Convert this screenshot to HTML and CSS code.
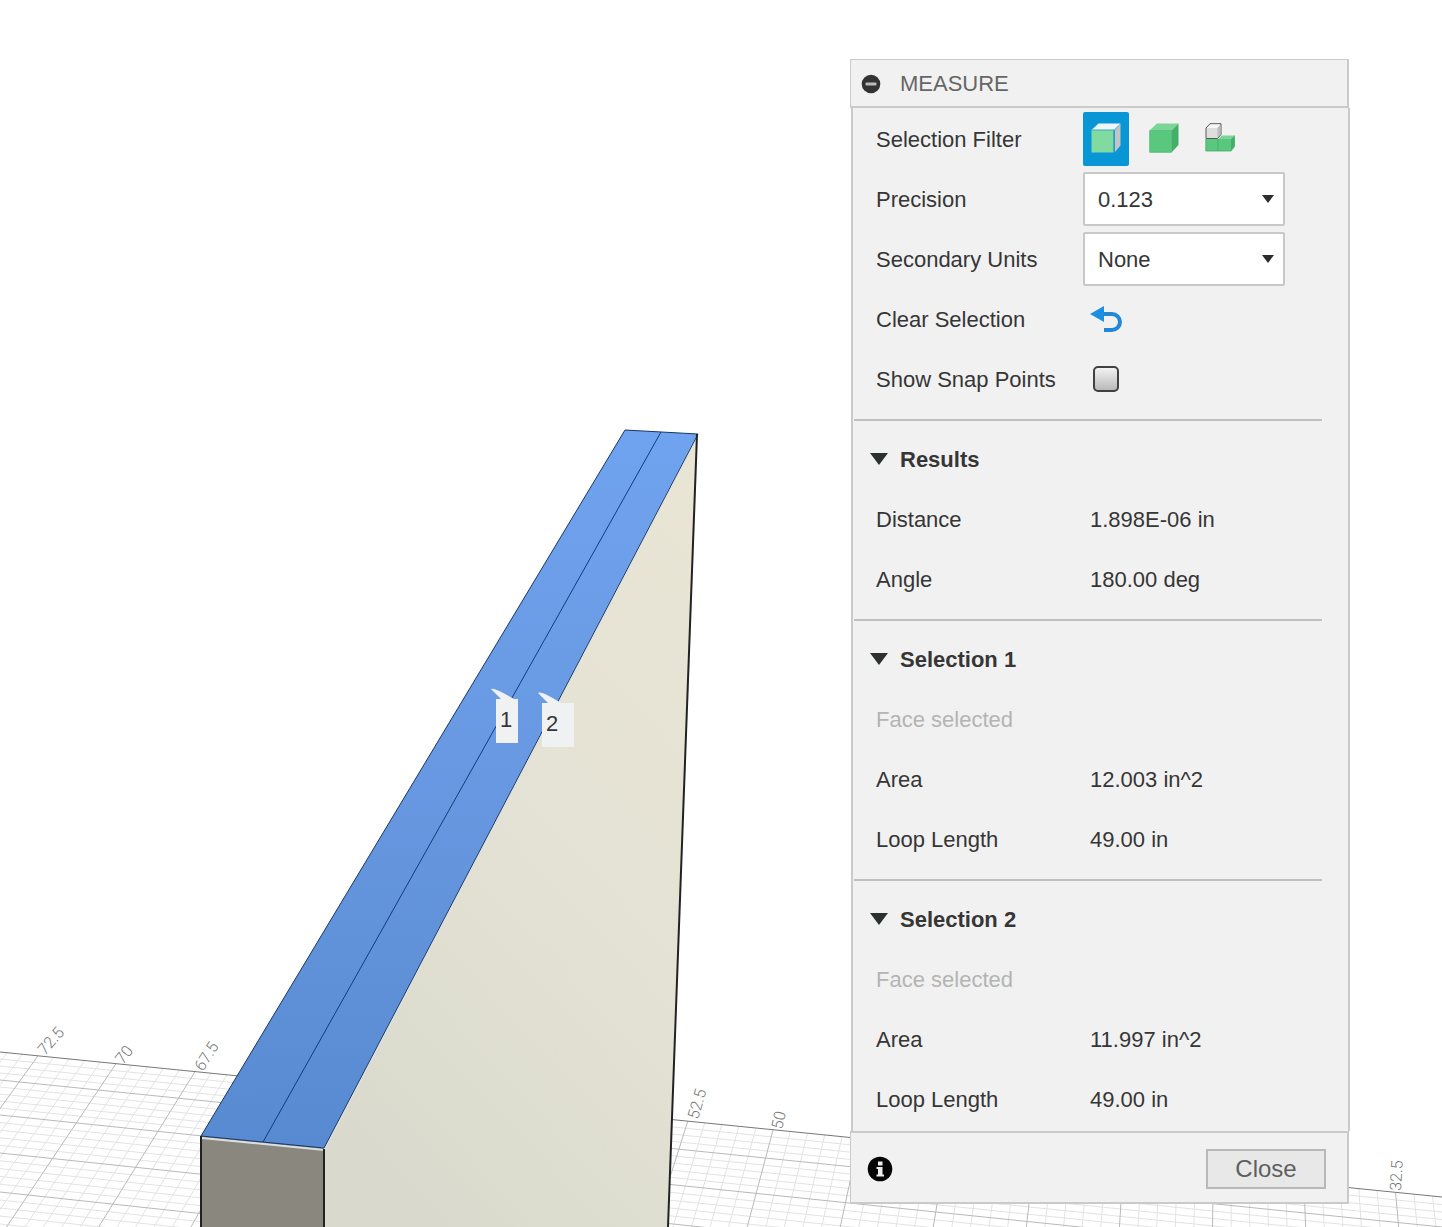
FILE: index.html
```html
<!DOCTYPE html>
<html lang="en">
<head>
<meta charset="utf-8">
<meta name="viewport" content="width=device-width, initial-scale=1">
<title>Measure</title>
<link rel="stylesheet" href="styles.css">
</head>
<body>
<main class="workspace">
  <svg class="scene" viewBox="0 0 1442 1227" preserveAspectRatio="xMinYMin slice" role="img" aria-label="Model viewport">
    <defs>
      <linearGradient id="top-face" x1="0" y1="0" x2="0" y2="1">
        <stop offset="0" stop-color="#70a3ef"/>
        <stop offset=".45" stop-color="#6899e2"/>
        <stop offset="1" stop-color="#588ad1"/>
      </linearGradient>
      <linearGradient id="side-face" x1=".8" y1="0" x2=".3" y2="1">
        <stop offset="0" stop-color="#e8e5d5"/>
        <stop offset=".5" stop-color="#e4e2d4"/>
        <stop offset="1" stop-color="#d9dacd"/>
      </linearGradient>
    </defs>
    <path id="grid-minor" class="grid-minor"/>
    <path id="grid-major" class="grid-major"/>
    <path class="grid-axis" d="M0 1052L1442 1197"/>
    <g class="ruler">
      <text transform="translate(45 1056) rotate(-49)">72.5</text>
      <text transform="translate(123 1065) rotate(-52)">70</text>
      <text transform="translate(203 1072) rotate(-58)">67.5</text>
      <text transform="translate(698 1120) rotate(-74)">52.5</text>
      <text transform="translate(782 1130) rotate(-77)">50</text>
      <text transform="translate(1401 1191) rotate(-87)">32.5</text>
    </g>
    <path fill="url(#side-face)" d="M698 434L668 1227H324V1148Z"/>
    <path fill="#8a887e" d="M201 1136L324 1148V1227H201Z"/>
    <path fill="url(#top-face)" d="M625 430L698 434L324 1148L201 1136Z"/>
    <path class="highlight" d="M202 1138L324 1150L697 437"/>
    <path class="edge-blue" d="M661 432L263 1142"/>
    <path class="edge-thin" d="M201 1136L625 430L698 434L324 1148Z"/>
    <path class="edge" d="M697 434L668 1227M324 1149V1227M201 1136V1227"/>
    <g class="tag">
      <path d="M491 689Q494 687 514 699H501Z"/>
      <path d="M496 699H518V743H496Z"/>
      <text x="500" y="727">1</text>
      <path d="M538 693Q541 690 561 703H548Z"/>
      <path d="M542 703H574V747H542Z"/>
      <text x="546" y="731">2</text>
    </g>
  </svg>

  <section class="panel" aria-labelledby="panel-title">
    <header class="panel-header">
      <button class="icon-button" type="button" aria-label="Collapse">
        <svg width="20" height="20" viewBox="0 0 20 20"><circle cx="10" cy="10" r="9.3" fill="#333"/><rect x="4.5" y="8.5" width="11" height="3" rx="1" fill="#bbb"/></svg>
      </button>
      <h1 class="panel-title" id="panel-title">MEASURE</h1>
    </header>

    <div class="panel-body">
      <div class="group">
        <div class="row">
          <span class="label" id="filter-label">Selection Filter</span>
          <div class="filters" role="group" aria-labelledby="filter-label">
            <button class="filter filter-on" type="button" aria-label="Faces" aria-pressed="true">
              <svg width="30" height="30" viewBox="0 0 30 30"><path fill="#edf6fb" d="M.5 7L7.500 .5H29.500L23 7Z"/><path fill="#c3c4c8" d="M24 7L29.500 .8V22.500L24 29Z"/><path fill="#81daa0" d="M.5 7H22.500V29.500H.5Z"/><path fill="none" stroke="#3ba7bd" d="M.5 7H23V29.500"/></svg>
            </button>
            <button class="filter" type="button" aria-label="Bodies" aria-pressed="false">
              <svg width="30" height="30" viewBox="0 0 30 30"><path fill="#7bd596" d="M.5 7.500L8 .5H29.500L22.500 7.500Z"/><path fill="#43b068" d="M22.500 7.500L29.500 .5V22L22.500 29.500Z"/><path fill="#5ac77f" d="M.5 7.500H22.500V29.500H.5Z"/><path fill="none" stroke="#4ab971" stroke-width=".7" d="M.8 7.500V29.200H22.500V7.500Z"/></svg>
            </button>
            <button class="filter" type="button" aria-label="Components" aria-pressed="false">
              <svg width="30" height="30" viewBox="2 0 30 30"><path fill="#7bd596" d="M13 16L17 12.500H29.500L26 16Z"/><path fill="#43b068" d="M26 16L29.500 12.500V23.500L26 28Z"/><path fill="#5ac77f" d="M.8 16H26V28H.8Z"/><path fill="none" stroke="#3fae66" stroke-width=".8" d="M13 16V28M.8 16V28H26L29.500 23.500V12.500"/><path fill="#dedede" stroke="#55595a" d="M1 15.500V5L5 .7H16V11.500L12.500 15.500Z"/><path fill="#f7f7f7" d="M2 5L6 1.500H15L12 5Z"/><path fill="#bcbcbc" d="M12.500 5L15.500 2V11L12.500 14.500Z"/></svg>
            </button>
          </div>
        </div>
        <div class="row">
          <label class="label" for="precision">Precision</label>
          <div class="select-box">
            <select id="precision"><option>0.123</option></select>
            <svg class="caret" width="12" height="8" viewBox="0 0 12 8"><path fill="#2d2d2d" d="M0 0H12L6 8Z"/></svg>
          </div>
        </div>
        <div class="row">
          <label class="label" for="units">Secondary Units</label>
          <div class="select-box">
            <select id="units"><option>None</option></select>
            <svg class="caret" width="12" height="8" viewBox="0 0 12 8"><path fill="#2d2d2d" d="M0 0H12L6 8Z"/></svg>
          </div>
        </div>
        <div class="row">
          <span class="label">Clear Selection</span>
          <button class="icon-button undo" type="button" aria-label="Clear selection">
            <svg width="32" height="26" viewBox="0 0 32 26"><path fill="#1b8fe1" d="M0 8L14 0V16Z"/><path fill="none" stroke="#2389d6" stroke-width="4" d="M13 8H22A8 8 0 0 1 22 24H14"/></svg>
          </button>
        </div>
        <div class="row">
          <label class="label" for="snap">Show Snap Points</label>
          <input class="tick" id="snap" type="checkbox">
        </div>
      </div>

      <section class="group">
        <h2 class="group-title"><svg width="18" height="12" viewBox="0 0 18 12"><path fill="#2d3030" d="M0 0H18L9 12Z"/></svg><span>Results</span></h2>
        <dl>
          <div class="row"><dt class="label">Distance</dt><dd>1.898E-06 in</dd></div>
          <div class="row"><dt class="label">Angle</dt><dd>180.00 deg</dd></div>
        </dl>
      </section>

      <section class="group">
        <h2 class="group-title"><svg width="18" height="12" viewBox="0 0 18 12"><path fill="#2d3030" d="M0 0H18L9 12Z"/></svg><span>Selection 1</span></h2>
        <p class="row muted">Face selected</p>
        <dl>
          <div class="row"><dt class="label">Area</dt><dd>12.003 in^2</dd></div>
          <div class="row"><dt class="label">Loop Length</dt><dd>49.00 in</dd></div>
        </dl>
      </section>

      <section class="group">
        <h2 class="group-title"><svg width="18" height="12" viewBox="0 0 18 12"><path fill="#2d3030" d="M0 0H18L9 12Z"/></svg><span>Selection 2</span></h2>
        <p class="row muted">Face selected</p>
        <dl>
          <div class="row"><dt class="label">Area</dt><dd>11.997 in^2</dd></div>
          <div class="row"><dt class="label">Loop Length</dt><dd>49.00 in</dd></div>
        </dl>
      </section>
    </div>

    <footer class="panel-footer">
      <button class="icon-button" type="button" aria-label="Information">
        <svg width="26" height="26" viewBox="0 0 26 26"><circle cx="13" cy="13" r="12.300" fill="#050505"/><path fill="#eee" d="M11 5.500H15.500V9.500H11ZM9.500 11H15.500V18.500H17V20.500H9.500V18.500H11V13H9.500Z"/></svg>
      </button>
      <button class="close" type="button">Close</button>
    </footer>
  </section>
</main>
<script src="grid.js"></script>
</body>
</html>
```
FILE: styles.css
```css
* { box-sizing: border-box; }

body {
  margin: 0;
  background: #fff;
  color: #363636;
  font: 22px/28px "Liberation Sans", Arial, sans-serif;
}

h1, h2, p, dl, dd { margin: 0; }

button, select { font: inherit; color: inherit; }

.workspace {
  position: relative;
  display: flex;
  justify-content: flex-end;
  align-items: flex-start;
  min-height: 100vh;
  padding: 59px 93px 22px 16px;
  overflow: hidden;
}

/* Model viewport, behind the panel */
.scene {
  position: absolute;
  inset: 0;
  width: 100%;
  height: 100%;
}

.scene path { vector-effect: non-scaling-stroke; }
.grid-minor { fill: none; stroke: #e3e3e3; }
.grid-major { fill: none; stroke: #b9b9b9; }
.grid-axis { fill: none; stroke: #777; }
.ruler { fill: #777; font: 300 16px Roboto, "Open Sans", sans-serif; }
.edge { fill: none; stroke: #222; stroke-width: 2; }
.edge-thin { fill: none; stroke: #163763; }
.edge-blue { fill: none; stroke: #103c7e; }
.highlight { fill: none; stroke: #dcdfe2; stroke-width: 2; }
.tag path { fill: #f0f1f3; }
.tag text { fill: #363636; }

/* Measure panel */
.panel {
  position: relative;
  width: 499px;
  max-width: 100%;
}

.panel-header, .panel-body, .panel-footer { background: #f1f1f1; }

.panel-header {
  display: flex;
  align-items: center;
  gap: 19px;
  height: 49px;
  padding: 2px 10px 0;
  border: solid #cacaca;
  border-width: 1px 2px 2px 1px;
}

.panel-title {
  color: #666;
  font-size: 22px;
  font-weight: 400;
}

.icon-button {
  display: flex;
  padding: 0;
  border: 0;
  background: none;
}

.panel-body {
  margin: 0 -1px 0 1px;
  padding: 1px 26px 2px 1px;
  border: solid #cacaca;
  border-width: 0 2px;
}

.group { padding-bottom: 10px; border-bottom: 2px solid #c0c0c0; }
.group + .group { padding-top: 8px; }
.group:last-child { padding-bottom: 0; border-bottom: 0; }

.row {
  display: flex;
  align-items: center;
  height: 60px;
  padding-left: 22px;
}

/* Text sits slightly below the middle of its row */
.label, dd, .group-title span { padding-top: 2px; }
.label { flex: 0 0 207px; }
dd { padding-left: 7px; }
.muted { padding-top: 2px; color: #b4b4b4; }

.group-title {
  display: flex;
  align-items: center;
  gap: 12px;
  height: 60px;
  padding-left: 16px;
  font-size: 22px;
}

.filters { display: flex; gap: 12px; }

.filter {
  display: flex;
  justify-content: center;
  align-items: center;
  width: 46px;
  height: 54px;
  padding: 0 0 3px;
  border: 0;
  border-radius: 2px;
  background: none;
}

.filter svg { overflow: visible; }
.filter-on { background: #0896d7; }

.select-box {
  display: grid;
  align-items: center;
  width: 202px;
}

.select-box select, .caret { grid-area: 1 / 1; }

.select-box select {
  appearance: none;
  width: 100%;
  height: 54px;
  padding: 2px 30px 0 13px;
  border: 2px solid #c8c8c8;
  border-radius: 2px;
  background: #fff;
}

.caret {
  justify-self: end;
  margin-right: 11px;
  pointer-events: none;
}

.undo { margin-left: 7px; }

.tick {
  appearance: none;
  width: 26px;
  height: 26px;
  margin: 0 10px;
  border: 2px solid #414141;
  border-radius: 5px;
  background: linear-gradient(#f2f2f2, #b9b9b9);
}

.panel-footer {
  display: flex;
  justify-content: space-between;
  align-items: center;
  height: 73px;
  padding: 2px 21px 0 16px;
  border: solid #cacaca;
  border-width: 2px 2px 2px 1px;
}

.close {
  width: 120px;
  height: 40px;
  padding: 0;
  border: 2px solid #b9b9b9;
  background: #e8e8e8;
  color: #5f5f5f;
  font-size: 24px;
}
```
FILE: grid.js
```js
// Ground grid in perspective: columns meet at one vanishing point,
// rows run almost parallel to the axis.
const vanish = { x: 1235, y: -605 };
const axisY = x => 1052 + 0.1006 * x;
const paths = { major: "", minor: "" };

for (let i = -3; i <= 90; i++) {
  const k = i / 5;
  const x = 38 + 77.6 * k + 0.453 * k * k;
  const y = axisY(x);
  const endX = x + (x - vanish.x) / (y - vanish.y) * (1240 - y);
  paths[i % 5 === 0 ? "major" : "minor"] += `M${x} ${y}L${endX} 1240`;
}

const rows = [0, 28, 63, 101, 140, 180];
for (let r = 0; r < rows.length - 1; r++) {
  const parts = r === 0 ? 4 : 5;
  for (let j = 1; j <= parts; j++) {
    const offset = rows[r] + (rows[r + 1] - rows[r]) * j / parts;
    const endY = axisY(1442) + offset * 1.07;
    paths[j === parts ? "major" : "minor"] += `M0 ${1052 + offset}L1442 ${endY}`;
  }
}

document.getElementById("grid-major").setAttribute("d", paths.major);
document.getElementById("grid-minor").setAttribute("d", paths.minor);
```
